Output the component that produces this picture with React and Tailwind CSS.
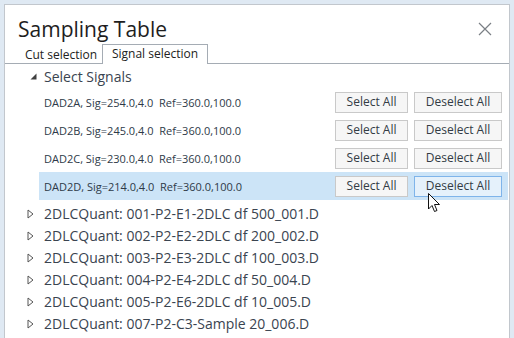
import React from "react";

const font = { fontFamily: '"Open Sans", "Noto Sans", sans-serif' };

const signals = [
  "DAD2A, Sig=254.0,4.0  Ref=360.0,100.0",
  "DAD2B, Sig=245.0,4.0  Ref=360.0,100.0",
  "DAD2C, Sig=230.0,4.0  Ref=360.0,100.0",
  "DAD2D, Sig=214.0,4.0  Ref=360.0,100.0",
];

const files = [
  "2DLCQuant: 001-P2-E1-2DLC df 500_001.D",
  "2DLCQuant: 002-P2-E2-2DLC df 200_002.D",
  "2DLCQuant: 003-P2-E3-2DLC df 100_003.D",
  "2DLCQuant: 004-P2-E4-2DLC df 50_004.D",
  "2DLCQuant: 005-P2-E6-2DLC df 10_005.D",
  "2DLCQuant: 007-P2-C3-Sample 20_006.D",
];

function Btn({ children, w, hover }) {
  return (
    <div
      className={`h-[21px] flex items-center justify-center border text-[12px] text-[#333c45] ${w} ${
        hover ? "border-[#7eb4ea] bg-[#e5f1fb]" : "border-[#c9c9c9] bg-[#f6f6f6]"
      }`}
    >
      {children}
    </div>
  );
}

export default function App() {
  return (
    <div className="w-[514px] h-[338px] overflow-hidden bg-[#dfe9f3] pt-[4px] px-[4px]" style={font}>
      <div className="relative h-[400px] bg-white border border-[#c2c7cd]">
        <div className="h-[39px] flex items-center justify-between pl-[13px] pr-[17px]">
          <div className="text-[21px] text-[#1e1e1e] leading-none pt-[10px]">Sampling Table</div>
          <svg width="14" height="14" viewBox="0 0 14 14" className="mt-[9px]">
            <path d="M1 1 L13 13 M13 1 L1 13" stroke="#7a7f85" strokeWidth="1.2" fill="none" />
          </svg>
        </div>
        <div className="h-[20px] flex items-end border-b border-[#a5acb4]">
          <div className="ml-[15px] w-[82px] h-[17px] flex items-center justify-center text-[12px] text-[#222] leading-none pt-[1px]">
            Cut selection
          </div>
          <div className="w-[106px] h-[20px] -mb-px bg-white border border-b-0 border-[#a5acb4] flex items-center justify-center text-[12px] text-[#222] leading-none pb-[1px]">
            Signal selection
          </div>
        </div>
        <div className="flex flex-col">
          <div className="h-[23px] flex items-center pl-[25px] mt-[1px]">
            <svg width="7" height="7" viewBox="0 0 7 7">
              <polygon points="6.5,0.5 6.5,6.5 0.5,6.5" fill="#404040" />
            </svg>
            <span className="ml-[7px] text-[14px] text-[#3a4450] leading-none">Select Signals</span>
          </div>
          <div className="flex flex-col pl-[34px] pr-[1px]">
            {signals.map((s, i) => (
              <div
                key={s}
                className={`h-[28px] flex items-center justify-between pl-[5px] pr-[6px] ${
                  i === 3 ? "bg-[#cce4f7]" : ""
                }`}
              >
                <span className="text-[11px] text-[#2e3a48] leading-none whitespace-pre">{s}</span>
                <div className="flex gap-[6px]">
                  <Btn w="w-[73px]">Select All</Btn>
                  <Btn w="w-[88px]" hover={i === 3}>Deselect All</Btn>
                </div>
              </div>
            ))}
          </div>
          <div className="flex flex-col mt-[3px]">
            {files.map((f) => (
              <div key={f} className="h-[22px] flex items-center pl-[22px]">
                <svg width="7" height="10" viewBox="0 0 7 10">
                  <polygon points="1,1 6,5 1,9" fill="none" stroke="#555" strokeWidth="1" />
                </svg>
                <span className="ml-[10px] text-[14px] text-[#3a4450] leading-none">{f}</span>
              </div>
            ))}
          </div>
        </div>
        <svg
          width="14"
          height="21"
          viewBox="0 0 14 21"
          className="absolute left-[423px] top-[188px]"
        >
          <path
            d="M0.5 0.5 L0.5 16 L4 12.5 L6.5 18.5 L9 17.5 L6.5 11.5 L11.5 11.5 Z"
            fill="white"
            stroke="#111"
            strokeWidth="1"
            strokeLinejoin="miter"
          />
        </svg>
      </div>
    </div>
  );
}
